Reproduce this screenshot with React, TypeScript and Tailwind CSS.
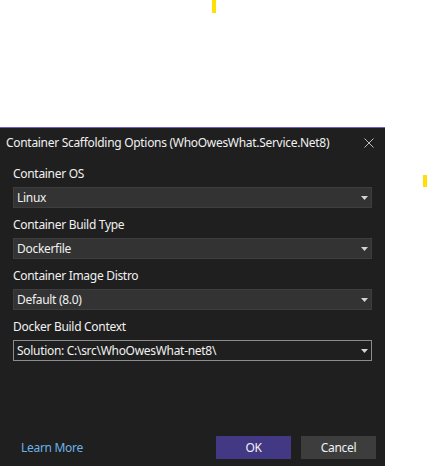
const font = { fontFamily: '"Noto Sans", "Liberation Sans", sans-serif' };

type Field = { label: string; value: string; focused?: boolean };

const fields: Field[] = [
  { label: 'Container OS', value: 'Linux' },
  { label: 'Container Build Type', value: 'Dockerfile' },
  { label: 'Container Image Distro', value: 'Default (8.0)' },
  { label: 'Docker Build Context', value: 'Solution: C:\\src\\WhoOwesWhat-net8\\', focused: true },
];

const Caret = () => (
  <svg width="7" height="4" viewBox="0 0 7 4" className="shrink-0">
    <path d="M0 0h7L3.5 4z" fill="#d4d4d4" />
  </svg>
);

const Dropdown = ({ value, focused }: { value: string; focused?: boolean }) => (
  <div
    className={
      focused
        ? 'flex h-[21px] items-center justify-between border border-[#8c8c8c] bg-[#1f1f1f] pl-[3px] pr-[3px]'
        : 'flex h-[21px] items-center justify-between border border-[#3e3e3e] bg-[#333333] pl-[3px] pr-[3px]'
    }
  >
    <span className="text-[12px] leading-none tracking-[-0.3px] text-[#f1f1f1]">{value}</span>
    <Caret />
  </div>
);

export default function App() {
  return (
    <div className="relative h-[466px] w-[428px] overflow-hidden bg-white" style={font}>
      {/* stray highlight marks from the capture */}
      <div className="absolute left-[212px] top-0 h-[13px] w-[4px] bg-[#ffe000]" />
      <div className="absolute left-[423px] top-[175px] h-[12px] w-[4px] bg-[#ffe000]" />

      <div className="h-[127px]" />

      <div className="flex h-[339px] w-[385px] flex-col border-t border-[#6d5fc9] bg-[#1f1f1f] tracking-[-0.3px]">
        <div className="flex h-[30px] items-center justify-between pl-[6px] pr-[11px]">
          <span className="text-[12px] text-[#f1f1f1]">Container Scaffolding Options (WhoOwesWhat.Service.Net8)</span>
          <svg width="10" height="10" viewBox="0 0 10 10">
            <path d="M0.5 0.5l9 9M9.5 0.5l-9 9" stroke="#bdbdbd" strokeWidth="1" />
          </svg>
        </div>

        <div className="mt-[8px] flex flex-col gap-[9px] px-[13px]">
          {fields.map((f) => (
            <div key={f.label} className="flex flex-col gap-[5px]">
              <div className="flex h-[16px] items-center text-[12px] text-[#f1f1f1]">{f.label}</div>
              <Dropdown value={f.value} focused={f.focused} />
            </div>
          ))}
        </div>

        <div className="mt-auto flex items-center pb-[7px] pl-[21px] pr-[9px]">
          <span className="text-[12px] text-[#6cb2e6]">Learn More</span>
          <div className="ml-auto flex gap-[10px]">
            <button className="flex h-[23px] w-[75px] items-center justify-center bg-[#433884] text-[12px] text-[#f1f1f1]">
              OK
            </button>
            <button className="flex h-[23px] w-[75px] items-center justify-center bg-[#3d3d3d] text-[12px] text-[#f1f1f1]">
              Cancel
            </button>
          </div>
        </div>
      </div>
    </div>
  );
}
